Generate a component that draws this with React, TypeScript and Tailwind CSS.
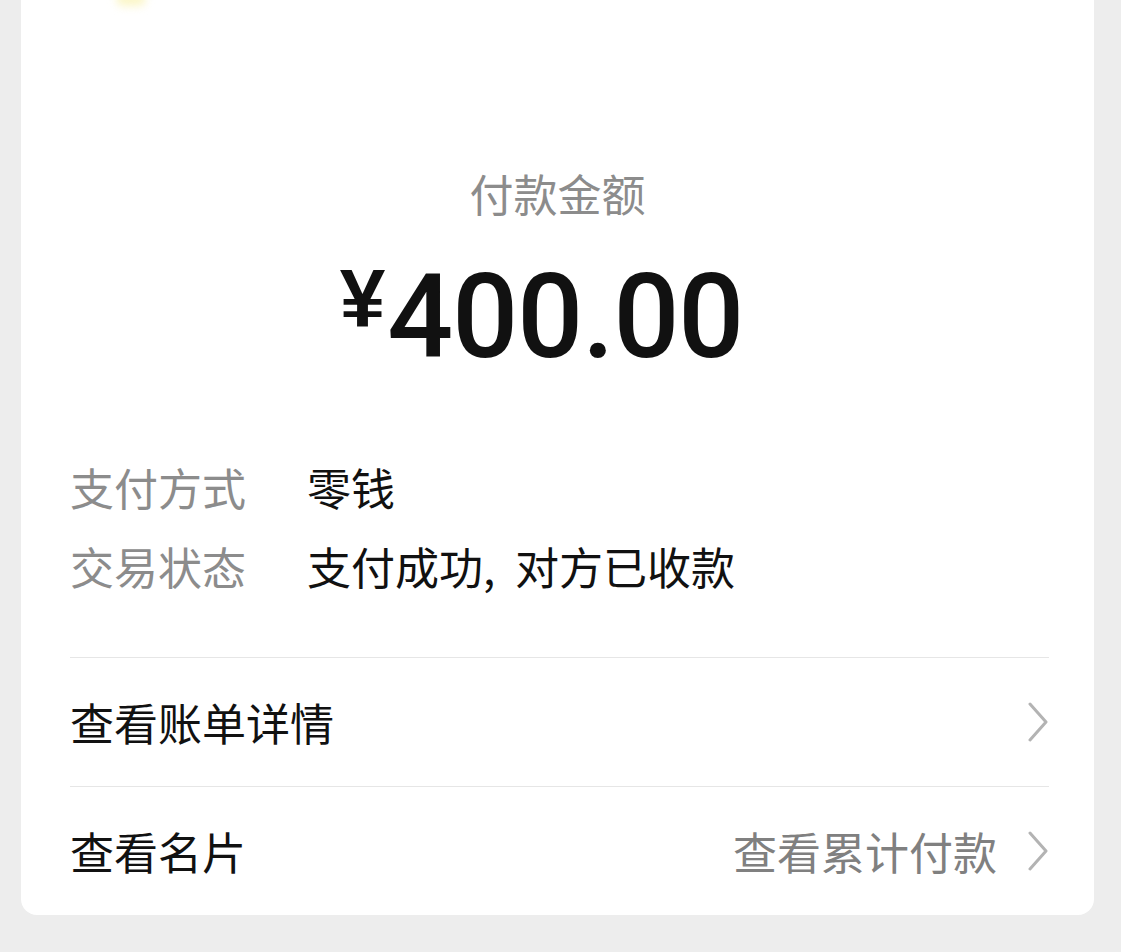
import React from "react";

const Chevron = () => (
  <svg width="22" height="40" viewBox="0 0 22 40" className="shrink-0">
    <polyline points="3,2 19,20 3,38" fill="none" stroke="#b3b3b3" strokeWidth="3" strokeLinecap="round" strokeLinejoin="round" />
  </svg>
);

export default function App() {
  const cjk = { fontFamily: '"Noto Sans CJK SC", "Noto Sans", sans-serif' };
  return (
    <div className="w-[1121px] h-[952px] bg-[#ededed] overflow-hidden" style={cjk}>
      <div className="ml-[21px] w-[1073px] h-[915px] bg-white rounded-b-[16px] relative">
        <div className="absolute left-[95px] top-[-8px] w-[30px] h-[14px] rounded-full bg-[#fbf6c8] blur-[4px]" />
        <div className="pt-[171px] text-center text-[44px] leading-[44px] text-[#8c8c8c]">付款金额</div>
        <div className="mt-[44px] flex justify-center items-start pr-[32px]">
          <span
            className="text-[82px] leading-none font-bold text-[#111] mt-[-2px] mr-[2px]"
            style={{ fontFamily: '"Liberation Sans", Arial, sans-serif' }}
          >
            ¥
          </span>
          <span
            className="text-[116px] leading-none font-medium text-[#111] tracking-[-1px]"
            style={{ fontFamily: 'Roboto, "Liberation Sans", sans-serif' }}
          >
            400.00
          </span>
        </div>
        <div className="mt-[90px] pl-[49px] text-[44px] leading-[44px]">
          <div className="flex">
            <span className="w-[237px] text-[#8c8c8c]">支付方式</span>
            <span className="text-[#111]">零钱</span>
          </div>
          <div className="flex mt-[35px]">
            <span className="w-[237px] text-[#8c8c8c]">交易状态</span>
            <span className="text-[#111] flex">
              <span>支付成功</span>
              <span className="w-[32px]">,</span>
              <span>对方已收款</span>
            </span>
          </div>
        </div>
        <div className="mt-[69px] ml-[49px] mr-[45px]">
          <div className="h-[129px] border-t border-[#e6e6e6] flex items-center justify-between">
            <span className="text-[44px] leading-[44px] text-[#111]">查看账单详情</span>
            <Chevron />
          </div>
          <div className="h-[129px] border-t border-[#e6e6e6] flex items-center justify-between">
            <span className="text-[44px] leading-[44px] text-[#111]">查看名片</span>
            <div className="flex items-center gap-[30px]">
              <span className="text-[44px] leading-[44px] text-[#808080]">查看累计付款</span>
              <Chevron />
            </div>
          </div>
        </div>
      </div>
    </div>
  );
}
